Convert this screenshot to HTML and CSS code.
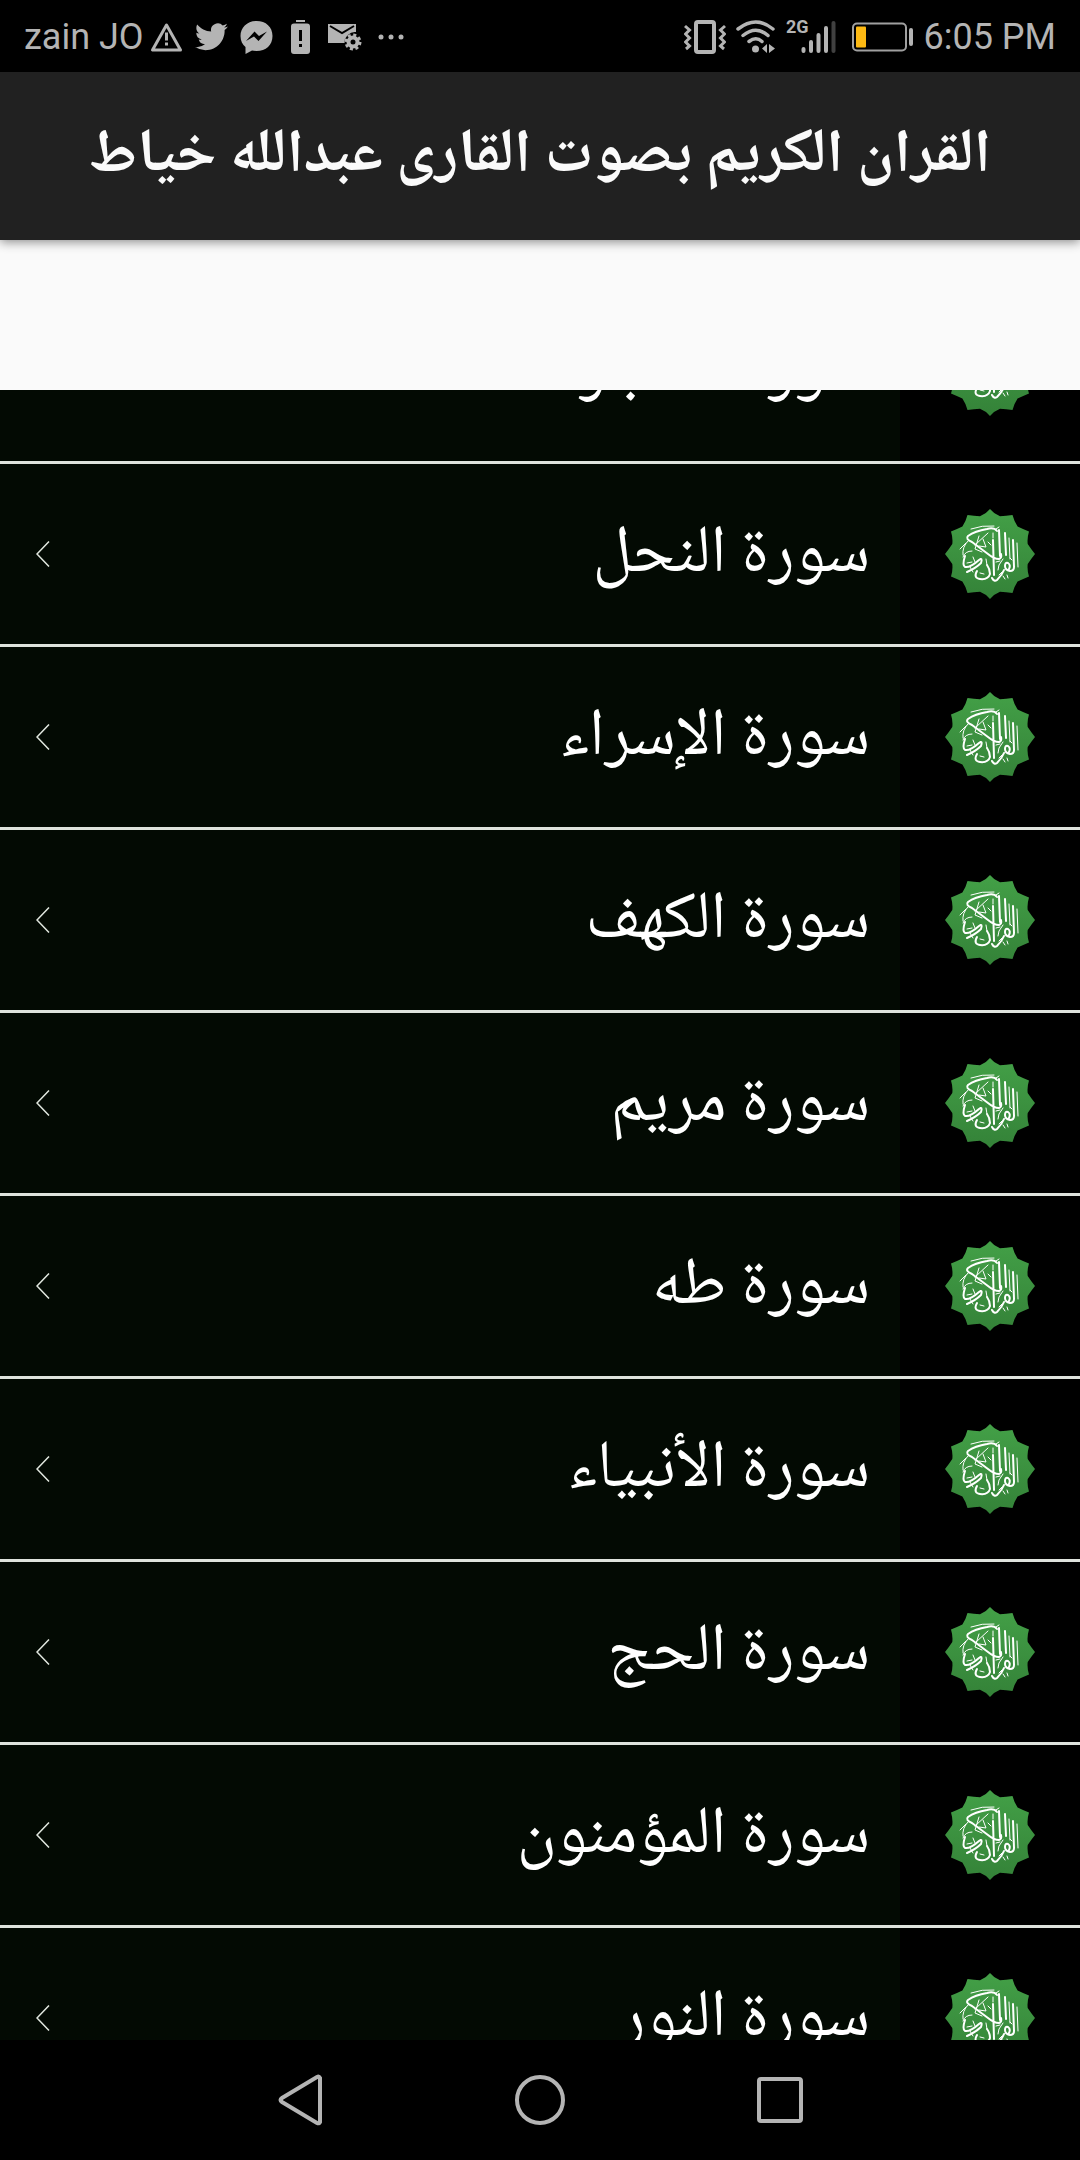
FILE: index.html
```
<!DOCTYPE html>
<html lang="ar" dir="rtl">
<head>
<meta charset="utf-8">
<meta name="viewport" content="width=device-width, initial-scale=1">
<title>القران الكريم بصوت القارى عبدالله خياط</title>
<link rel="stylesheet" href="styles.css">
</head>
<body>
<svg class="defs" aria-hidden="true">
  <defs>
    <linearGradient id="green" x1="0" y1="0" x2="0" y2="1">
      <stop offset="0" stop-color="#43a047"/>
      <stop offset="1" stop-color="#348238"/>
    </linearGradient>
    <symbol id="emblem" viewBox="0 0 90 90">
      <path fill="url(#green)" d="M45 0Q49 5 55 7.300Q61 7 67.500 6Q69 12 72.600 17.400Q78 20 84 22.500Q82 29 82.700 35Q86 40 90 45Q86 50 82.700 55Q82 61 84 67.500Q78 70 72.600 72.600Q69 78 67.500 84Q61 83 55 82.700Q49 85 45 90Q41 85 35 82.700Q29 83 22.500 84Q21 78 17.400 72.600Q12 70 6 67.500Q8 61 7.300 55Q4 50 0 45Q4 40 7.300 35Q8 29 6 22.500Q12 20 17.400 17.400Q21 12 22.500 6Q29 7 35 7.300Q41 5 45 0Z"/>
      <g fill="none" stroke="#fff" stroke-linecap="round" stroke-linejoin="round">
        <path stroke-width="2" d="M52 22Q49 18 42 20Q30 22 23 27Q20 30 27 33L43 45Q49 50 54 50Q57 49 56 45M68 31L69 58Q69 62 65 62Q60 61 60 57Q60 53 63 54Q66 56 64 60M59 61Q57 66 52 71Q49 73 47 69M48 31L49 66M54 21L55 47M60 24L61 46M20 47Q17 56 20 58Q25 59 34 51Q38 48 36 54Q31 59 22 63M32 62Q28 69 35 70Q43 71 45 65Q45 60 42 56"/>
        <path stroke-width="1" d="M26 20Q37 16 49 17M43 24L30 36M34 27L30 40L37 43M38 30L41 38L34 37M23 32Q17 38 18 46M15 40L21 34M27 42Q20 42 18 48M48 24V29M64 29L65 50M72 34L73 58M58 50L54 56L53 61M41 50L42 56M28 48L30 53M35 64L39 65M65 49L67 51M55 52L51 53M51 20L54 18M22 54L27 53M58 67L60 70M62 66L63 69M25 58L28 63M54 66L57 63M43 33L46 36"/>
      </g>
    </symbol>
    <symbol id="chevron" viewBox="0 0 14 26">
      <path fill="none" stroke="#e2e8e0" stroke-width="1.500" d="M13 .500L1 13L13 25.500"/>
    </symbol>
  </defs>
</svg>

<div class="screen">
  <div class="status" dir="ltr">
    <div class="status-side">
      <span>zain JO</span>
      <svg class="warning" viewBox="0 0 33 30" width="33" height="30"><path fill="none" stroke="currentColor" stroke-width="3" stroke-linejoin="round" d="M16.500 3L2.500 28H30.500Z"/><path stroke="currentColor" stroke-width="3" d="M16.500 10.500V18.500M16.500 20.500V23.500"/></svg>
      <svg viewBox="0 0 24 20" width="33" height="28"><path fill="currentColor" d="M23.950 2.370a10 10 0 0 1-2.820.770 4.960 4.960 0 0 0 2.160-2.720c-.950.560-2 .960-3.130 1.190a4.920 4.920 0 0 0-8.380 4.480C7.690 5.890 4.070 3.930 1.640.960a4.820 4.820 0 0 0-.670 2.470c0 1.710.870 3.210 2.190 4.100a4.900 4.900 0 0 1-2.230-.620v.060a4.920 4.920 0 0 0 3.950 4.830 5 5 0 0 1-2.210.080 4.940 4.940 0 0 0 4.600 3.420A9.870 9.870 0 0 1 0 17.340a14 14 0 0 0 7.550 2.210c9.050 0 14-7.500 14-13.990 0-.210 0-.420-.020-.630a9.940 9.940 0 0 0 2.420-2.560Z"/></svg>
      <svg viewBox="0 0 33 33" width="33" height="33"><path fill="currentColor" fill-rule="evenodd" d="M16.500 0C7 0 .500 6.500.500 15C.500 20 2.500 23.500 5.500 26V33L12 29.500Q14 30 16.500 30C26 30 32.500 24 32.500 15S26 0 16.500 0ZM6 20L14.500 10.500L19 15L27 10.500L18.500 20L14 15.500Z"/></svg>
      <svg class="alert-battery" viewBox="0 0 19 34" width="19" height="34"><path fill="currentColor" d="M5 0H14V2H5ZM3 3.500H16Q19 3.500 19 6.500V31Q19 34 16 34H3Q0 34 0 31V6.500Q0 3.500 3 3.500Z"/><path stroke="#000" stroke-width="3" d="M9.500 10V21M9.500 24V27"/></svg>
      <svg class="mail" viewBox="0 0 34 28" width="34" height="28"><path fill="currentColor" d="M0 1H28V9Q19 8 17 20H0Z"/><path fill="none" stroke="#000" stroke-width="2" d="M2 3L14 10L26 3"/><circle cx="25" cy="19" r="8.500" fill="#000"/><circle cx="25" cy="19" r="4.500" fill="none" stroke="currentColor" stroke-width="4"/><circle cx="25" cy="19" r="7" fill="none" stroke="currentColor" stroke-width="3" stroke-dasharray="3 2.500"/></svg>
      <svg viewBox="0 0 26 6" width="26" height="6"><g fill="currentColor"><circle cx="3" cy="3" r="2.500"/><circle cx="13" cy="3" r="2.500"/><circle cx="23" cy="3" r="2.500"/></g></svg>
    </div>
    <div class="status-side status-end">
      <svg viewBox="0 0 42 34" width="42" height="34"><g fill="none" stroke="currentColor" stroke-width="3"><rect x="12" y="2" width="18" height="30" rx="2" stroke-width="4"/><path d="M1 6L5.500 10L1.500 14L5.500 18L1.500 22L5.500 26L2 29M41 6L36.500 10L40.500 14L36.500 18L40.500 22L36.500 26L40 29"/></g></svg>
      <svg class="wifi" viewBox="0 0 40 34" width="40" height="34"><g fill="none" stroke="currentColor" stroke-width="3.500" stroke-linecap="round"><path d="M2 9Q20-5 37 9M7 15.500Q20 5 32 15.500M13 21.500Q20 16 26 21.500"/></g><circle cx="19.500" cy="29" r="3.500" fill="currentColor"/><path fill="currentColor" d="M31 24V33L26 28.500ZM33 24L39 28.500L33 33Z"/></svg>
      <span class="network">2G</span>
      <svg class="bars" viewBox="0 0 35 34" width="35" height="34"><g fill="none" stroke="currentColor" stroke-width="4" stroke-linecap="round"><path d="M2.500 29V31M10 22V31M17.500 15V31M25 8V31"/><path stroke="#404040" d="M32.500 3V31"/></g></svg>
      <svg class="battery" viewBox="0 0 62 30" width="62" height="30"><rect x="1" y="1.500" width="53" height="27" rx="4" fill="none" stroke="#a0a0a0" stroke-width="2"/><rect x="4" y="4.500" width="10" height="21" rx="1" fill="#fdb913"/><rect x="57" y="6" width="4" height="18" rx="2" fill="currentColor"/></svg>
      <span>6:05 PM</span>
    </div>
  </div>

  <header class="app-bar"><h1>القران الكريم بصوت القارى عبدالله خياط</h1></header>
  <div class="banner"></div>

  <main class="list">
    <ul>
      <li><button class="row"><span class="thumb"><svg><use href="#emblem"/></svg></span><span class="name">سورة الحجر</span><svg class="chevron"><use href="#chevron"/></svg></button></li>
      <li><button class="row"><span class="thumb"><svg><use href="#emblem"/></svg></span><span class="name">سورة النحل</span><svg class="chevron"><use href="#chevron"/></svg></button></li>
      <li><button class="row"><span class="thumb"><svg><use href="#emblem"/></svg></span><span class="name">سورة الإسراء</span><svg class="chevron"><use href="#chevron"/></svg></button></li>
      <li><button class="row"><span class="thumb"><svg><use href="#emblem"/></svg></span><span class="name">سورة الكهف</span><svg class="chevron"><use href="#chevron"/></svg></button></li>
      <li><button class="row"><span class="thumb"><svg><use href="#emblem"/></svg></span><span class="name">سورة مريم</span><svg class="chevron"><use href="#chevron"/></svg></button></li>
      <li><button class="row"><span class="thumb"><svg><use href="#emblem"/></svg></span><span class="name">سورة طه</span><svg class="chevron"><use href="#chevron"/></svg></button></li>
      <li><button class="row"><span class="thumb"><svg><use href="#emblem"/></svg></span><span class="name">سورة الأنبياء</span><svg class="chevron"><use href="#chevron"/></svg></button></li>
      <li><button class="row"><span class="thumb"><svg><use href="#emblem"/></svg></span><span class="name">سورة الحج</span><svg class="chevron"><use href="#chevron"/></svg></button></li>
      <li><button class="row"><span class="thumb"><svg><use href="#emblem"/></svg></span><span class="name">سورة المؤمنون</span><svg class="chevron"><use href="#chevron"/></svg></button></li>
      <li><button class="row"><span class="thumb"><svg><use href="#emblem"/></svg></span><span class="name">سورة النور</span><svg class="chevron"><use href="#chevron"/></svg></button></li>
    </ul>
  </main>

  <nav class="system-nav" dir="ltr">
    <button aria-label="رجوع"><svg viewBox="0 0 50 52" width="50" height="52"><path d="M45 4V48Q44 50 42 49L7 28Q4 26 7 24L42 3Q44 2 45 4Z"/></svg></button>
    <button aria-label="الرئيسية"><svg viewBox="0 0 52 52" width="52" height="52"><circle cx="26" cy="26" r="23"/></svg></button>
    <button aria-label="التطبيقات الأخيرة"><svg viewBox="0 0 52 52" width="52" height="52"><rect x="5" y="5" width="42" height="42" rx="2"/></svg></button>
  </nav>
</div>
</body>
</html>
```
FILE: styles.css
```
* { box-sizing: border-box; }
body { margin: 0; background: #000; }
button { border: 0; background: none; padding: 0; color: inherit; font: inherit; }
svg { flex: none; }
.defs { position: absolute; width: 0; height: 0; }

.screen {
  display: flex;
  flex-direction: column;
  height: 100vh;
  font-family: "Noto Naskh Arabic", "Noto Sans Arabic", "Noto Sans", serif;
}

.status {
  display: flex;
  flex: none;
  justify-content: space-between;
  height: 72px;
  padding: 2px 24px 0;
  background: #000;
  color: #b4b4b4;
  font: 36px Roboto, sans-serif;
}
.status-side { display: flex; align-items: center; gap: 12px; }
.warning { margin-left: -6px; }
.alert-battery { margin: 0 6px; }
.mail { margin-right: 4px; }
.status-end { gap: 10px; }
.network { align-self: flex-start; margin: 14px -18px 0 0; font-size: 18px; font-weight: 700; }
.battery { margin: 0 0 0 6px; }

.app-bar {
  display: flex;
  flex: none;
  justify-content: center;
  align-items: center;
  position: relative;
  height: 168px;
  padding-top: 4px;
  background: #212121;
  box-shadow: 0 2px 10px rgba(0, 0, 0, .45);
  color: #fafafa;
}
h1 { margin: 0; font-size: 61px; font-weight: 700; line-height: 96px; }
.banner { flex: none; height: 150px; background: #fafafa; }

.list { display: flex; flex: 1; flex-direction: column; min-height: 0; overflow: hidden; }
ul { margin: -109px 0 0; padding: 0; list-style: none; }
li { border-bottom: 3px solid #dfe3dd; }
.row {
  display: flex;
  align-items: center;
  width: 100%;
  height: 180px;
  padding-left: 36px;
  background: #030a03;
  color: #fff;
  font-size: 67px;
  line-height: 108px;
}
.thumb { display: flex; flex: none; align-items: center; justify-content: center; width: 180px; height: 180px; background: #000; }
.thumb svg { width: 90px; height: 90px; }
.name { flex: 1; padding: 4px 30px 0 0; text-align: right; }
.chevron { width: 14px; height: 26px; }

.system-nav { display: flex; flex: none; justify-content: center; height: 120px; background: #000; }
.system-nav button { display: flex; align-items: center; justify-content: center; width: 240px; }
.system-nav svg { fill: none; stroke: #b4b4b4; stroke-width: 4; }
```
